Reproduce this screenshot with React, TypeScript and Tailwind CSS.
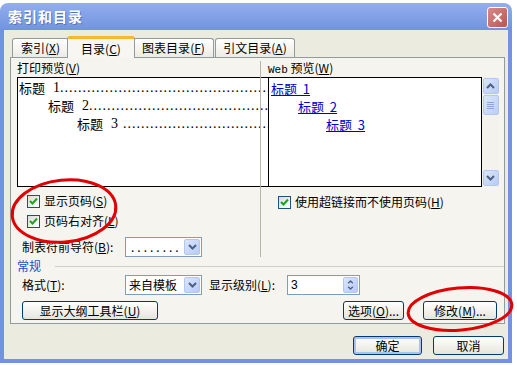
import React from 'react';

const M = ({ k }: { k: string }) => (
  <>
    (<span className="underline">{k}</span>)
  </>
);

const Chev = ({ up, small }: { up?: boolean; small?: boolean }) => (
  <svg width={small ? 7 : 9} height={small ? 4 : 6} viewBox="0 0 9 6">
    <path
      d={up ? 'M1 5 L4.5 1.5 L8 5' : 'M1 1 L4.5 4.5 L8 1'}
      fill="none"
      stroke="#4d6185"
      strokeWidth="2"
    />
  </svg>
);

function SBtn({ up }: { up?: boolean }) {
  return (
    <div className="w-[16px] h-[16px] rounded-[2px] border border-[#b5c7ef] bg-gradient-to-br from-[#dbe5fd] to-[#b8cbf6] flex items-center justify-center">
      <Chev up={up} />
    </div>
  );
}

function ScrollBar() {
  return (
    <div className="w-[17px] h-full bg-[#f3f2ec] flex flex-col items-center py-[1px]">
      <SBtn up />
      <div className="w-[16px] h-[20px] mt-[1px] rounded-[2px] border border-[#b5c7ef] bg-gradient-to-br from-[#dbe5fd] to-[#bccdf6] flex flex-col items-center justify-center gap-[1px]">
        <div className="w-[7px] h-px bg-[#8fa6d8]" />
        <div className="w-[7px] h-px bg-[#8fa6d8]" />
        <div className="w-[7px] h-px bg-[#8fa6d8]" />
        <div className="w-[7px] h-px bg-[#8fa6d8]" />
      </div>
      <div className="flex-1" />
      <SBtn />
    </div>
  );
}

function Check({ label }: { label: React.ReactNode }) {
  return (
    <div className="flex items-center h-[16px] gap-[4px]">
      <span className="w-[13px] h-[13px] border border-[#1c5180] bg-gradient-to-br from-[#dcdcd5] to-white flex items-center justify-center">
        <svg width="9" height="8" viewBox="0 0 9 8">
          <path d="M1 4 L3.5 6.5 L8 1.5" fill="none" stroke="#21a121" strokeWidth="2" />
        </svg>
      </span>
      <span>{label}</span>
    </div>
  );
}

function Combo({ text, w, dotted }: { text: string; w: string; dotted?: boolean }) {
  return (
    <div className={`${w} h-[20px] bg-white border border-[#7f9db9] flex items-center`}>
      <span className={`flex-1 pl-[3px] leading-none ${dotted ? 'tracking-[3px] pl-[5px]' : ''}`}>{text}</span>
      <div className="w-[16px] h-[16px] mr-px rounded-[2px] border border-[#b5c7ef] bg-gradient-to-br from-[#dbe5fd] to-[#b8cbf6] flex items-center justify-center">
        <Chev />
      </div>
    </div>
  );
}

function Btn({ children, w, def }: { children: React.ReactNode; w: string; def?: boolean }) {
  return (
    <div
      className={`${w} h-[19px] rounded-[3px] border border-[#003c74] bg-gradient-to-b from-white to-[#e6e5dc] flex items-center justify-center ${
        def ? 'shadow-[inset_0_0_0_2px_#a9c3f1]' : ''
      }`}
    >
      {children}
    </div>
  );
}

function Tab({ children, w, sel }: { children: React.ReactNode; w: string; sel?: boolean }) {
  if (sel)
    return (
      <div
        className={`${w} h-[22px] -mb-px -mx-[2px] z-10 border border-b-0 border-[#919b9c] border-t-[3px] border-t-[#f8b830] rounded-t-[3px] bg-[#f7f6f2] flex items-center justify-center`}
      >
        {children}
      </div>
    );
  return (
    <div
      className={`${w} h-[19px] border border-b-0 border-[#919b9c] rounded-t-[3px] bg-gradient-to-b from-white to-[#ecebe5] flex items-center justify-center`}
    >
      {children}
    </div>
  );
}

// one line of the print preview: heading, dot leader, page number
function TocRow({ n, page, indent }: { n: string; page: string; indent: string }) {
  return (
    <div className={`flex h-[18px] leading-[18px] ${indent}`}>
      <span className="inline-block h-[18px] font-['Noto_Sans_CJK_SC',sans-serif] text-[13px]">标题</span>
      <span className="inline-block h-[18px] ml-[8px]">{n}</span>
      <span className={`flex-1 h-[18px] overflow-hidden whitespace-nowrap tracking-[1px] ${n === '3' ? 'ml-[5px]' : ''}`}>
        {'.'.repeat(60)}
      </span>
      <span className="inline-block h-[18px]">{page}</span>
    </div>
  );
}

function WebRow({ n, indent }: { n: string; indent: string }) {
  return (
    <div className={`h-[18px] ${indent}`}>
      <span className="inline-block h-[18px] leading-[18px] underline whitespace-pre">{`标题  ${n}`}</span>
    </div>
  );
}

export default function App() {
  return (
    <div className="relative w-[517px] h-[365px] bg-white overflow-hidden pt-[3px] text-[12px] text-black font-['Noto_Sans_CJK_SC',sans-serif]">
      <div className="w-[512px] h-[360px] flex flex-col">
        {/* Title bar */}
        <div className="h-[27px] rounded-t-[8px] bg-gradient-to-b from-[#93aeee] to-[#7193e0] flex items-center justify-between pl-[8px] pr-[4px]">
          <span className="text-white font-bold text-[14px] tracking-[1px] [text-shadow:1px_1px_0_#5a74b8]">
            索引和目录
          </span>
          <div className="w-[21px] h-[21px] mt-[2px] rounded-[3px] border border-white bg-gradient-to-br from-[#d88a8a] to-[#b95454] flex items-center justify-center">
            <svg width="11" height="11" viewBox="0 0 11 11">
              <path d="M1.5 1.5 L9.5 9.5 M9.5 1.5 L1.5 9.5" stroke="white" strokeWidth="2.2" />
            </svg>
          </div>
        </div>

        {/* Frame */}
        <div className="flex-1 bg-[#7193e0] px-[4px] pb-[4px] flex">
          <div className="flex-1 bg-[#ecebe0] pl-[6px] pr-[3px] pt-[5px] flex flex-col">
            {/* Tabs */}
            <div className="flex items-end h-[22px] pl-[2px]">
              <Tab w="w-[57px]">
                索引<M k="X" />
              </Tab>
              <Tab w="w-[68px]" sel>
                目录<M k="C" />
              </Tab>
              <Tab w="w-[81px]">
                图表目录<M k="F" />
              </Tab>
              <div className="w-px" />
              <Tab w="w-[80px]">
                引文目录<M k="A" />
              </Tab>
            </div>

            {/* Panel */}
            <div className="h-[267px] border border-[#919b9c] bg-[#f5f4ef] pl-[6px] flex flex-col">
              <div className="flex">
                {/* Left column */}
                <div className="w-[236px] pt-[3px] flex flex-col">
                  <div className="h-[14px] leading-[14px]">
                    打印预览<M k="V" />
                  </div>
                  <div className="mt-[2px] h-[110px] flex">
                    <div className="flex-1 bg-white border border-black pt-[1px] pl-[1px] pr-[6px] text-[14px] font-['Liberation_Serif',serif]">
                      <TocRow n="1" page="1" indent="pl-0" />
                      <TocRow n="2" page="3" indent="pl-[29px]" />
                      <TocRow n="3" page="5" indent="pl-[58px]" />
                    </div>
                    <ScrollBar />
                  </div>
                  <div className="mt-[6px] pl-[10px]">
                    <Check label={<>显示页码<M k="S" /></>} />
                  </div>
                  <div className="mt-[4px] pl-[10px]">
                    <Check label={<>页码右对齐<M k="L" /></>} />
                  </div>
                  <div className="mt-[8px] h-[20px] flex items-center">
                    <span className="w-[108px] pl-[5px]">
                      制表符前导符<M k="B" />:
                    </span>
                    <Combo text="........" w="w-[77px]" dotted />
                  </div>
                </div>

                {/* Divider */}
                <div className="ml-[7px] mt-[3px] w-px h-[196px] bg-[#b8b6a8]" />

                {/* Right column */}
                <div className="ml-[7px] w-[231px] pt-[3px] flex flex-col">
                  <div className="h-[14px] leading-[14px]">
                    <span className="font-['Liberation_Mono',monospace] text-[11px]">Web</span> 预览<M k="W" />
                  </div>
                  <div className="mt-[2px] h-[110px] flex">
                    <div className="flex-1 bg-white border border-black pt-[1px] text-[13px] text-[#0000cc]">
                      <WebRow n="1" indent="pl-[2px]" />
                      <WebRow n="2" indent="pl-[29px]" />
                      <WebRow n="3" indent="pl-[57px]" />
                    </div>
                    <ScrollBar />
                  </div>
                  <div className="mt-[7px] pl-[10px]">
                    <Check label={<>使用超链接而不使用页码<M k="H" /></>} />
                  </div>
                </div>
              </div>

              {/* 常规 */}
              <div className="mt-[2px] h-[14px] flex items-center">
                <span className="text-[#1a4fc8]">常规</span>
                <div className="flex-1 ml-[14px] h-px bg-[#d2d0c2]" />
              </div>

              <div className="mt-[2px] h-[20px] flex items-center">
                <span className="w-[108px] pl-[5px]">
                  格式<M k="T" />:
                </span>
                <Combo text="来自模板" w="w-[77px]" />
                <span className="ml-[7px] w-[78px]">
                  显示级别<M k="L" />:
                </span>
                <div className="w-[73px] h-[20px] bg-white border border-[#7f9db9] flex items-center">
                  <span className="flex-1 pl-[3px] font-['Liberation_Sans',sans-serif]">3</span>
                  <div className="w-[15px] h-[16px] mr-px rounded-[2px] border border-[#b5c7ef] bg-gradient-to-br from-[#dbe5fd] to-[#b8cbf6] flex flex-col items-center justify-center gap-[2px]">
                    <Chev up small />
                    <Chev small />
                  </div>
                </div>
              </div>

              <div className="mt-[6px] h-[19px] flex items-center">
                <div className="ml-[5px]">
                  <Btn w="w-[136px]">
                    显示大纲工具栏<M k="U" />
                  </Btn>
                </div>
                <div className="ml-[185px]">
                  <Btn w="w-[61px]">
                    选项<M k="O" />...
                  </Btn>
                </div>
                <div className="ml-[19px]">
                  <Btn w="w-[74px]">
                    修改<M k="M" />...
                  </Btn>
                </div>
              </div>
            </div>

            {/* OK / Cancel */}
            <div className="mt-[12px] flex justify-end pr-px gap-[11px]">
              <Btn w="w-[69px]" def>
                确定
              </Btn>
              <Btn w="w-[71px]">取消</Btn>
            </div>
          </div>
        </div>
      </div>

      {/* Red annotation rings */}
      <svg className="absolute inset-0 pointer-events-none" width="517" height="365">
        <ellipse cx="64" cy="211" rx="52" ry="31" fill="none" stroke="#e00000" strokeWidth="3" transform="rotate(-6 64 211)" />
        <ellipse cx="460" cy="309" rx="52" ry="21" fill="none" stroke="#e00000" strokeWidth="3" transform="rotate(-5 460 309)" />
      </svg>
    </div>
  );
}
